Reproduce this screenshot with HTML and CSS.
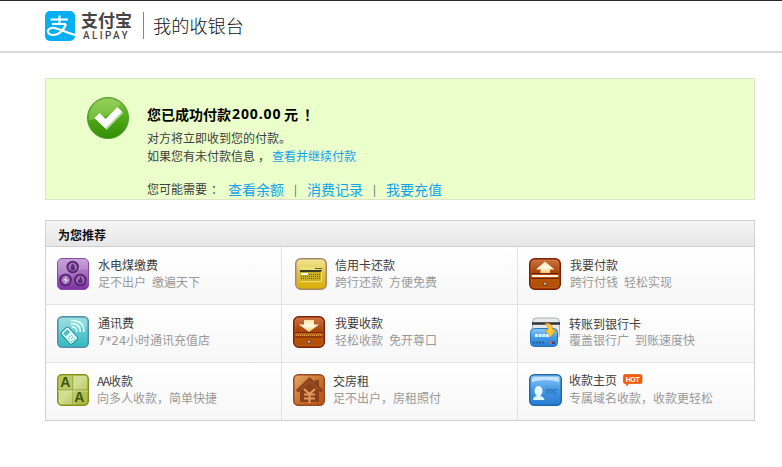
FILE: index.html
```html
<!DOCTYPE html>
<html lang="zh-CN">
<head>
<meta charset="utf-8">
<title>我的收银台</title>
<link rel="stylesheet" href="styles.css">
</head>
<body>
<header class="top">
  <svg class="logo" viewBox="0 0 30 30"><rect width="30" height="30" rx="5" fill="#06aef2"/><g fill="none" stroke="#fff"><path d="M5.5 8.500H23M14.500 4.500V13M7 13H21" stroke-width="2.100"/><path d="M21 13C19 18.500 14.500 24 8.500 24C4.500 24 2.500 22 3 19.800C3.500 17.300 7 16.300 10.500 17.200C16 18.500 22 22 30 24" stroke-width="2.200"/></g></svg>
  <div class="brand"><b class="cn">支付宝</b><b class="en">ALIPAY</b></div>
  <h1>我的收银台</h1>
</header>
<main>
  <section class="success">
    <svg class="tick" viewBox="0 0 44 44">
      <defs><linearGradient id="tg" x2="0" y2="1"><stop stop-color="#87c64a"/><stop offset=".5" stop-color="#4fa817"/><stop offset="1" stop-color="#358e05"/></linearGradient></defs>
      <circle cx="22" cy="22" r="20.500" fill="url(#tg)" stroke="#4a9b28"/>
      <path d="M3 24A19 19 0 0 1 35 8C25 19 14 24 3 24Z" fill="#b4e37d" opacity=".38"/>
      <path d="M9 21.500L13.500 17L20 23.500L32 11.500L36.500 16L20 33Z" fill="#d5ecc4" opacity=".7" transform="translate(.7 1)"/>
      <path d="M8.500 22L13.500 17L19.500 23L31.500 11L36 15.500L19.500 32.500Z" fill="#fff"/>
    </svg>
    <div class="msg">
      <h2>您已成功付款<span class="amount">200.00</span><span class="unit">元</span><span class="bang">！</span></h2>
      <p>对方将立即收到您的付款。</p>
      <p>如果您有未付款信息<span class="comma">，</span><a>查看并继续付款</a></p>
      <p class="more"><span class="need">您可能需要<span class="colon">：</span></span><a>查看余额</a><i>|</i><a>消费记录</a><i>|</i><a>我要充值</a></p>
    </div>
  </section>
  <section class="panel">
    <h3>为您推荐</h3>
    <div class="grid">
      <div class="cell">
        <svg viewBox="0 0 32 32"><defs><linearGradient id="pu" x2="0" y2="1"><stop stop-color="#bd8fd2"/><stop offset=".55" stop-color="#a268bd"/><stop offset="1" stop-color="#7b2fa0"/></linearGradient></defs><rect x=".5" y=".5" width="31" height="31" rx="4.500" fill="url(#pu)" stroke="#8a4aa8"/><path d="M1 18V5Q1 1 5 1H27Q31 1 31 5V11Q18 12 1 18Z" fill="#fff" opacity=".16"/><g fill="#a273bb" stroke="#55226f" stroke-width="1.800"><circle cx="15.700" cy="9" r="5.300"/><circle cx="8.600" cy="22" r="5.300"/><circle cx="23.300" cy="22" r="5.300"/></g><path d="M15.700 5.500Q19 10 17.500 12Q15.700 13 14 12Q12.500 10 15.700 5.500Z" fill="#5b2b76"/><path d="M10 18L5.500 22.500L8.500 22.500L7 26L12 21.500H9Z" fill="#e0c9ed"/><path d="M23 18Q27 22 25 25Q23 26 21.500 25Q20 23 21.500 21L22.500 22Z" fill="#5b2b76"/></svg>
        <div class="txt"><h4>水电煤缴费</h4><p>足不出户 缴遍天下</p></div>
      </div>
      <div class="cell wide">
        <svg viewBox="0 0 32 32"><defs><linearGradient id="ye" x2="0" y2="1"><stop stop-color="#f4e797"/><stop offset=".5" stop-color="#ddc243"/><stop offset="1" stop-color="#d9ac00"/></linearGradient></defs><rect x=".75" y=".75" width="30.500" height="30.500" rx="5" fill="url(#ye)" stroke="#aa8766" stroke-width="1.500"/><rect x="5" y="9" width="22" height="15" fill="#c8ad28"/><path d="M5 9H27V12H5Z" fill="#ebe175"/><path d="M5 13H27" stroke="#3c3b27" stroke-width="2"/><path d="M20 10.500H27" stroke="#565229"/><rect x="6" y="15" width="7" height="2" fill="#fff"/><path d="M14 16.500H26M6 18.500H26M6 20.500H26" stroke="#655e25" stroke-dasharray="1 1"/><path d="M5.500 23.500H26.500V13" fill="none" stroke="#f5e46a"/></svg>
        <div class="txt"><h4>信用卡还款</h4><p>跨行还款 方便免费</p></div>
      </div>
      <div class="cell c3">
        <svg viewBox="0 0 32 32"><defs><linearGradient id="br" x2="0" y2="1"><stop stop-color="#cf7448"/><stop offset=".45" stop-color="#a84508"/><stop offset=".55" stop-color="#b95608"/><stop offset="1" stop-color="#b04e08"/></linearGradient><linearGradient id="ar" x2="0" y2="1"><stop stop-color="#ffe3a8"/><stop offset=".5" stop-color="#fff9e2"/><stop offset="1" stop-color="#efc573"/></linearGradient></defs><rect x=".75" y=".75" width="30.500" height="30.500" rx="5" fill="url(#br)" stroke="#821f05" stroke-width="1.500"/><rect x="2.500" y="2.500" width="27" height="27" rx="3" fill="none" stroke="#d58b48" stroke-opacity=".5" stroke-dasharray="1 1"/><path d="M16 3.500L25.500 11.500H21V15.500H11.500V11.500H7Z" fill="url(#ar)"/><path d="M2 15.500H30M2 20.500H30" stroke="#702005"/><path d="M3 18H29" stroke="#fff" stroke-width="1.800"/><circle cx="16" cy="26" r="1.700" fill="#563d2e"/><circle cx="16" cy="25.700" r="1" fill="#dde5e8"/></svg>
        <div class="txt l1"><h4 class="pay">我要付款</h4><p class="pay">跨行付钱 轻松实现</p></div>
      </div>
      <div class="cell">
        <svg viewBox="0 0 32 32"><defs><linearGradient id="te" x2="0" y2="1"><stop stop-color="#86d8dc"/><stop offset="1" stop-color="#32bac2"/></linearGradient></defs><rect x=".75" y=".75" width="30.500" height="30.500" rx="4.500" fill="url(#te)" stroke="#578daa" stroke-width="1.500"/><path d="M2 17V5Q2 2 5 2H27Q30 2 30 5V11Q18 12 2 17Z" fill="#fff" opacity=".18"/><g transform="rotate(-42 12 20)"><rect x="7.500" y="12" width="10" height="16" rx="2" fill="#dcffff" stroke="#218c99"/><rect x="9.500" y="14" width="6" height="4" fill="#50bdc5"/><path d="M9.500 21H15.500M9.500 23.500H15.500M9.500 26H15.500" stroke="#42a8b2" stroke-dasharray="1 1"/></g><path d="M15 11Q19 10.500 20 16M14 8Q22.500 6.500 23.500 16M14 4.500Q27 4 27 16" fill="none" stroke="#e7ffff" stroke-width="1.600"/></svg>
        <div class="txt"><h4>通讯费</h4><p><span class="num">7*24</span>小时通讯充值店</p></div>
      </div>
      <div class="cell">
        <svg viewBox="0 0 32 32"><rect x=".75" y=".75" width="30.500" height="30.500" rx="5" fill="url(#br)" stroke="#821f05" stroke-width="1.500"/><rect x="2.500" y="2.500" width="27" height="27" rx="3" fill="none" stroke="#d58b48" stroke-opacity=".5" stroke-dasharray="1 1"/><path d="M11 4H21V8.500H26L16 16L6 8.500H11Z" fill="url(#ar)"/><path d="M2 16.500H30M2 21H30" stroke="#702005"/><path d="M3 18H29" stroke="#c8792c"/><path d="M3 19.500H29" stroke="#e1a050" stroke-dasharray="1 1"/><circle cx="16" cy="26" r="1.700" fill="#563d2e"/><circle cx="16" cy="25.700" r="1" fill="#dde5e8"/></svg>
        <div class="txt t1"><h4>我要收款</h4><p>轻松收款 免开尊口</p></div>
      </div>
      <div class="cell c3">
        <svg viewBox="0 0 32 32"><defs><linearGradient id="bl" x2="0" y2="1"><stop stop-color="#8dcafa"/><stop offset=".5" stop-color="#4699e3"/><stop offset="1" stop-color="#297bd2"/></linearGradient></defs><rect x="3.500" y="2" width="27" height="20" rx="4" fill="#e6e8e9" stroke="#aaafb2"/><path d="M3 7.500H31" stroke="#303236" stroke-width="2.500"/><rect x="1.500" y="12.500" width="27" height="18" rx="4" fill="url(#bl)" stroke="#2777bd"/><path d="M6 19.500H21" stroke="#dcf6ff" stroke-width="3" stroke-dasharray="3 .7"/><path d="M4 26.500H16" stroke="#2861a3" stroke-width="2" stroke-dasharray="2 1"/><path d="M20 25.500H23V28H20Z" fill="#ed5149"/><path d="M23 25.500H26V28H23Z" fill="#264f8c"/><path d="M16 7.500Q23 6 24 14H27L21.500 21L16 14H19Q20 10 16 7.500Z" fill="#ffcb38" stroke="#cf8f12" stroke-width=".7"/></svg>
        <div class="txt d1"><h4>转账到银行卡</h4><p>覆盖银行广 到账速度快</p></div>
      </div>
      <div class="cell">
        <svg viewBox="0 0 32 32"><defs><linearGradient id="gr" x2="1" y2="1"><stop stop-color="#c9d775"/><stop offset=".45" stop-color="#d2df93"/><stop offset="1" stop-color="#a4b83b"/></linearGradient></defs><rect x=".75" y=".75" width="30.500" height="30.500" rx="4" fill="url(#gr)" stroke="#82920e" stroke-width="1.500"/><path d="M2 2H16V16H2ZM16 16H30V30H16Z" fill="#a5b643" opacity=".5"/><path d="M1 16H31M16 1V31" stroke="#77891c" stroke-opacity=".7"/><path d="M1 17H31M17 1V31" stroke="#dfe9a5" opacity=".7"/><g font-family="Liberation Sans" font-size="14" font-weight="700" fill="#43540c"><text x="3.300" y="13.300">A</text><text x="17.300" y="27.500">A</text></g></svg>
        <div class="txt l1"><h4 class="aa"><span>AA</span>收款</h4><p>向多人收款，简单快捷</p></div>
      </div>
      <div class="cell">
        <svg viewBox="0 0 32 32"><defs><linearGradient id="ho" x2="1" y2="1"><stop stop-color="#e9a967"/><stop offset=".5" stop-color="#c87231"/><stop offset="1" stop-color="#b45014"/></linearGradient></defs><rect x=".75" y=".75" width="30.500" height="30.500" rx="4.500" fill="url(#ho)" stroke="#974a24" stroke-width="1.500"/><path d="M16.500 3L22 8V6H26V12L30 16L28 18.500L26 17V28H7V17L4.500 18.500L3 16Z" fill="#8b401a"/><path d="M16.500 5L28 16H25L16.500 9L8 16H5Z" fill="#9d5128" opacity=".7"/><path d="M11 15L16.500 20L22 15M16.500 19V29M11 20.500H22M11 24.500H22" fill="none" stroke="#e09a60" stroke-width="2.200"/></svg>
        <div class="txt l1"><h4>交房租</h4><p>足不出户，房租照付</p></div>
      </div>
      <div class="cell c3">
        <svg class="me" viewBox="0 0 33 32"><rect x=".75" y=".75" width="31.500" height="30.500" rx="4.500" fill="url(#bl)" stroke="#1d69ac" stroke-width="1.500"/><path d="M3 8V5Q4 3 7 3H27Q30 3 30 5V8Q17 4 3 8Z" fill="#d6efff" opacity=".8"/><ellipse cx="9.500" cy="17" rx="4" ry="5" fill="#e8fbff"/><path d="M7.500 20H11.500V22Q15 23 15.500 26H4Q4 23 7.500 22Z" fill="#dff8ff"/><text x="16.500" y="19.500" font-family="Liberation Sans" font-size="9" font-style="italic" fill="#2368ae">mc</text></svg>
        <div class="txt u1"><h4>收款主页<svg class="hot" viewBox="0 0 20 13"><path d="M2 .5H17.500Q19 .5 19 2V8Q19 9.500 17.500 9.500H6L3.500 12V9.500H2Q.5 9.500 .5 8V2Q.5 .5 2 .5Z" fill="#f45b0b" stroke="#db4808" stroke-width=".6"/><text x="2.700" y="7.600" textLength="14" font-family="Liberation Sans" font-size="7" font-weight="700" fill="#fff">HOT</text></svg></h4><p>专属域名收款，收款更轻松</p></div>
      </div>
    </div>
  </section>
</main>
</body>
</html>
```
FILE: styles.css
```css
* { box-sizing: border-box; }
body, h1, h2, h3, h4, p { margin: 0; }
body {
  width: 782px;
  height: 467px;
  overflow: hidden;
  background: #fff;
  color: #404040;
  font: 12px/18px "Noto Sans CJK SC", sans-serif;
}
svg { flex: none; display: block; }
.top {
  height: 53px;
  padding: 10px 0 0 45px;
  border-top: 1px solid #292735;
  border-bottom: 2px solid #d7d7d7;
  display: flex;
  align-items: flex-start;
}
.logo { width: 30px; height: 30px; }
.brand {
  width: 69px;
  height: 27px;
  margin-top: 1px;
  padding-left: 6px;
  border-right: 1px solid #858585;
  color: #454545;
}
.brand b { display: block; white-space: nowrap; }
.cn { margin-top: -1px; font-size: 17px; line-height: 18px; font-weight: 700; }
.en { margin-top: 2px; font: 500 10px/10px Roboto, sans-serif; letter-spacing: 2.4px; padding-left: 2px; }
h1 { margin: 1px 0 0 9px; font-size: 18.2px; line-height: 26px; font-weight: 300; color: #111; }
main { width: 710px; margin: 25px 0 0 45px; }
.success {
  height: 122px;
  border: 1px solid #dde3cb;
  background: #ebffcb;
  display: flex;
}
.tick { width: 44px; height: 44px; margin: 17px 0 0 40px; }
.msg { padding: 25px 0 0 17px; white-space: nowrap; }
h2 { display: flex; margin-bottom: 5px; font-size: 14px; line-height: 20px; font-weight: 700; color: #000; }
.amount { font-family: "Noto Sans", sans-serif; letter-spacing: .9px; width: 53px; padding-left: 1px; }
.unit { width: 20px; }
.bang { width: 14px; }
a { color: #12a3ec; }
.comma { display: inline-block; width: 17px; padding-left: 3px; }
.colon { padding-left: 4px; }
.more { display: flex; margin-top: 15px; font-size: 14px; }
.need { width: 81px; font-size: 12px; }
.more i { width: 23px; text-align: center; font-style: normal; font-size: 11px; color: #555; }
.panel { margin-top: 20px; border: 1px solid #cfcfcf; }
h3 {
  height: 26px;
  padding-left: 12px;
  border-bottom: 1px solid #cfcfcf;
  background: linear-gradient(#f5f5f5, #e7e7e7);
  font-size: 12px;
  line-height: 27px;
  color: #111;
}
.grid { display: grid; grid-template-columns: 236px 236px 236px; grid-auto-rows: 58px; height: 173px; }
.cell {
  display: flex;
  padding: 11px 0 0 11px;
  border-right: 1px solid #e3e3e3;
  border-bottom: 1px solid #e3e3e3;
  background: linear-gradient(#fff, #f7f7f7);
}
.cell:nth-child(3n) { border-right: 0; }
.cell:nth-child(n+7) { border-bottom: 0; height: 57px; }
.cell > svg { width: 32px; height: 32px; }
.cell > .me { width: 33px; }
.wide { padding-left: 13px; }
.wide .txt { margin-left: 8px; }
.txt { margin: -2px 0 0 9px; white-space: nowrap; }
.t1 { margin-left: 10px; }
.l1 { margin-left: 8px; }
.d1 { margin-top: -1px; margin-left: 8px; }
.u1 { margin-top: -3px; margin-left: 7px; }
.pay { padding-left: 1px; }
h4 { display: flex; font-size: 12px; line-height: 18px; font-weight: 400; color: #404040; }
.txt p { margin-top: -1px; line-height: 18px; color: #999; word-spacing: 3.3px; }
.d1 p { margin-top: -2px; }
.u1 p { margin-top: 0; }
.num { font-family: "DejaVu Sans", sans-serif; letter-spacing: -.2px; }
.aa span { width: 12px; letter-spacing: -1.5px; }
.hot { width: 20px; height: 13px; margin: 3px 0 0 6px; }
```
